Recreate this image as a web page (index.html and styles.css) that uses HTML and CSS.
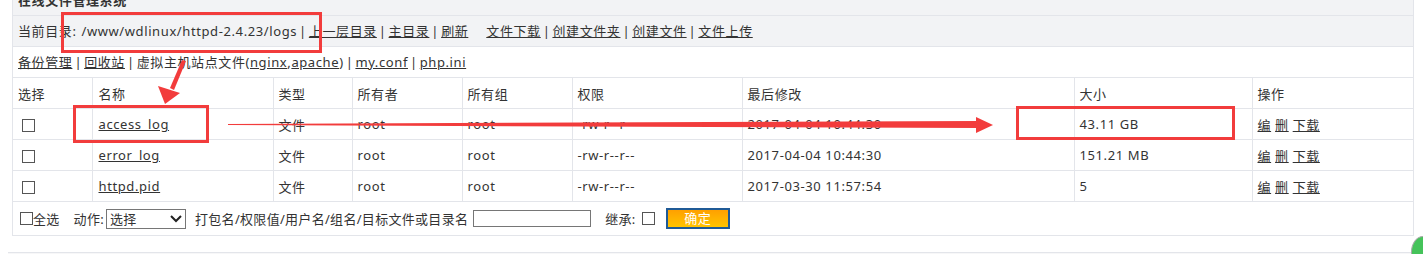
FILE: index.html
```html
<!DOCTYPE html>
<html>
<head>
    <title>在线文件管理系统</title>
    <link rel="stylesheet" href="styles.css">
</head>
<body>
    <div class="main">
        <div class="title">在线文件管理系统</div>
        <div class="path">
            当前目录: <span class="cur">/www/wdlinux/httpd-2.4.23/logs</span> | <a href="#">上一层目录</a> | <a href="#">主目录</a> | <a href="#">刷新</a>
            <span class="tools"><a href="#">文件下载</a> | <a href="#">创建文件夹</a> | <a href="#">创建文件</a> | <a href="#">文件上传</a></span>
        </div>
        <div class="links">
            <a href="#">备份管理</a> | <a href="#">回收站</a> | 虚拟主机站点文件(<a href="#">nginx</a>,<a href="#">apache</a>) | <a href="#">my.conf</a> | <a href="#">php.ini</a>
        </div>
        <table class="files">
            <colgroup>
                <col style="width:79px"><col style="width:181px"><col style="width:79px"><col style="width:110px"><col style="width:110px"><col style="width:170px"><col style="width:332px"><col style="width:178px"><col>
            </colgroup>
            <tr>
                <th>选择</th><th>名称</th><th>类型</th><th>所有者</th><th>所有组</th><th>权限</th><th>最后修改</th><th>大小</th><th>操作</th>
            </tr>
            <tr>
                <td><span class="check"></span></td>
                <td><a href="#">access_log</a></td>
                <td>文件</td><td>root</td><td>root</td><td>-rw-r--r--</td><td>2017-04-04 10:44:30</td><td>43.11 GB</td>
                <td class="ops"><a href="#">编</a> <a href="#">删</a> <a href="#">下载</a></td>
            </tr>
            <tr>
                <td><span class="check"></span></td>
                <td><a href="#">error_log</a></td>
                <td>文件</td><td>root</td><td>root</td><td>-rw-r--r--</td><td>2017-04-04 10:44:30</td><td>151.21 MB</td>
                <td class="ops"><a href="#">编</a> <a href="#">删</a> <a href="#">下载</a></td>
            </tr>
            <tr>
                <td><span class="check"></span></td>
                <td><a href="#">httpd.pid</a></td>
                <td>文件</td><td>root</td><td>root</td><td>-rw-r--r--</td><td>2017-03-30 11:57:54</td><td>5</td>
                <td class="ops"><a href="#">编</a> <a href="#">删</a> <a href="#">下载</a></td>
            </tr>
        </table>
        <div class="footer">
            <span class="check small"></span><span>全选</span>
            <span class="act">动作:</span>
            <span class="select">选择<svg width="12" height="8" viewBox="0 0 12 8"><path d="M1 1 L6 6 L11 1" fill="none" stroke="#222" stroke-width="2"/></svg></span>
            <span class="hint">打包名/权限值/用户名/组名/目标文件或目录名</span>
            <span class="textbox"></span>
            <span class="inherit">继承:</span>
            <span class="check small"></span>
            <span class="btn">确定</span>
        </div>
    </div>
    <div class="next"></div>
    <div class="bubble"></div>

    <!-- 标注 -->
    <div class="mark mark1"></div>
    <div class="mark mark2"></div>
    <div class="mark mark3"></div>
    <svg class="arrows" width="1423" height="254" viewBox="0 0 1423 254">
        <polygon points="182,60 186,61 174,90 170,88" fill="#f23c3c"/>
        <polygon points="158,86 165,104 180,93" fill="#f23c3c"/>
        <polygon points="228,124 977,121 977,128 228,125" fill="#f23c3c"/>
        <polygon points="976,117 993,125 976,133" fill="#f23c3c"/>
    </svg>
</body>
</html>
```

FILE: styles.css
```css
body {
    margin: 0;
    font-family: "Noto Sans", "Noto Sans CJK SC", sans-serif;
    font-size: 13px;
    letter-spacing: 0.6px;
    color: #333;
    background: #fff;
    position: relative;
    width: 1423px;
    height: 254px;
    overflow: hidden;
}

a {
    color: #333;
}

.main {
    margin: -15px 0 0 12px;
    width: 1402px;
    border: 1px solid #e3e5ea;
    border-top: none;
    box-sizing: border-box;
}

.title {
    height: 30px;
    line-height: 30px;
    padding-left: 5px;
    font-weight: bold;
    background: #f2f3f5;
    border-bottom: 1px solid #e3e5ea;
}

.path {
    height: 30px;
    line-height: 30px;
    padding-left: 5px;
    word-spacing: -2px;
    background: #f2f3f5;
    border-bottom: 1px solid #e3e5ea;
}

.cur {
    margin-left: 3px;
}

.tools {
    margin-left: 16px;
}

.links {
    height: 30px;
    line-height: 30px;
    padding-left: 5px;
    word-spacing: -2px;
    border-bottom: 1px solid #e3e5ea;
}

.files {
    width: 100%;
    border-collapse: collapse;
    table-layout: fixed;
}

.files th,
.files td {
    height: 30px;
    padding: 0 0 0 5px;
    text-align: left;
    font-weight: normal;
    border: 1px solid #e3e5ea;
    border-top: none;
    white-space: nowrap;
}

.files th:first-child,
.files td:first-child {
    border-left: none;
}

.files th:last-child,
.files td:last-child {
    border-right: none;
}

.files th:nth-child(2),
.files td:nth-child(2) {
    padding-left: 6px;
}

.check {
    display: inline-block;
    width: 11px;
    height: 11px;
    border: 1px solid #555;
    margin-left: 4px;
    vertical-align: middle;
}

.footer {
    height: 33px;
    display: flex;
    align-items: center;
    font-size: 13px;
    letter-spacing: 0.3px;
    padding-left: 7px;
}

.footer .check.small {
    margin-left: 0;
    width: 11px;
    height: 11px;
}

.act {
    margin-left: 14px;
}

.select {
    width: 72px;
    height: 18px;
    border: 1px solid #767676;
    margin-left: 2px;
    padding: 0 3px;
    display: flex;
    align-items: center;
    justify-content: space-between;
    font-size: 13px;
    line-height: 18px;
}

.hint {
    margin-left: 9px;
}

.textbox {
    width: 116px;
    height: 15px;
    border: 1px solid #767676;
    margin-left: 5px;
}

.inherit {
    margin-left: 14px;
    margin-right: 6px;
}

.btn {
    margin-left: 11px;
    width: 60px;
    height: 17px;
    line-height: 17px;
    text-align: center;
    color: #fff;
    border: 2px solid #1f5a96;
    background: linear-gradient(#ffa000, #ffc400);
}

.next {
    margin: 16px 0 0 8px;
    height: 10px;
    border-top: 1px solid #e3e5ea;
    background: #f7f7f8;
}

.bubble {
    position: absolute;
    right: -12px;
    bottom: -14px;
    width: 22px;
    height: 30px;
    border-radius: 50%;
    border: 1px solid #aaa;
    background: #45c35a;
}

.mark {
    position: absolute;
    border: 3px solid #f23c3c;
    box-sizing: border-box;
}

.mark1 {
    left: 61px;
    top: 12px;
    width: 261px;
    height: 41px;
}

.mark2 {
    left: 73px;
    top: 105px;
    width: 136px;
    height: 38px;
}

.mark3 {
    left: 1016px;
    top: 106px;
    width: 219px;
    height: 34px;
}

.arrows {
    position: absolute;
    left: 0;
    top: 0;
}
```
